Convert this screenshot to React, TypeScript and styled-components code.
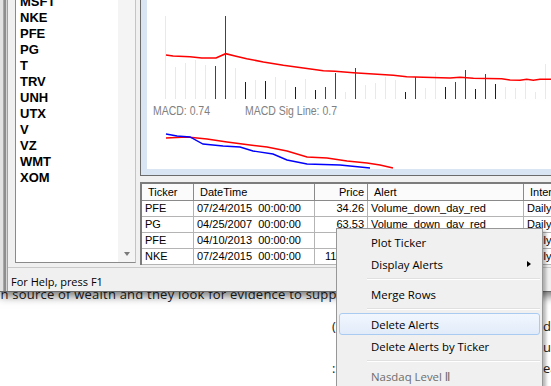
import React from "react";
import styled, { createGlobalStyle } from "styled-components";

const GlobalStyle = createGlobalStyle`
  *, *::before, *::after { box-sizing: border-box; }
  html, body { margin: 0; padding: 0; background: #ffffff; }
  body { overflow: hidden; font-family: "Liberation Sans", Arial, sans-serif; }
`;

const UI_FONT = `"Open Sans", "Noto Sans", "DejaVu Sans", sans-serif`;

const Page = styled.div`
  position: relative;
  width: 551px;
  height: 386px;
  overflow: hidden;
  background: #ffffff;
`;

const Window = styled.div`
  position: relative;
  z-index: 1;
  display: flex;
  width: 640px;
  background: #f0f0f0;
  border-bottom: 1px solid #6a6a6a;
  box-shadow: 0 4px 9px rgba(0, 0, 0, 0.55);
`;

const Frame = styled.div`
  flex: none;
  width: 7px;
  background: linear-gradient(
    to right,
    #e2e2e2 0 3px,
    #a8a8a8 3px 4px,
    #8e8e8e 4px 6px,
    #d4d4d4 6px 7px
  );
`;

const Client = styled.div`
  flex: 1;
  min-width: 0;
  display: flex;
  flex-direction: column;
  border-left: 1px solid #a0a0a0;
`;

const Main = styled.div`
  display: flex;
  align-items: flex-start;
  height: 267px;
  padding-left: 7px;
`;

const ListBox = styled.div`
  flex: none;
  display: flex;
  width: 121px;
  height: 263px;
  border-left: 1px solid #8a8a8a;
  border-right: 1px solid #c4c4c4;
  border-bottom: 1px solid #8a8a8a;
`;

const TickerList = styled.div`
  flex: 1;
  background: #ffffff;
  overflow: hidden;
`;

const TickerItems = styled.ul`
  margin: -6px 0 0;
  padding: 0 0 0 4px;
  list-style: none;
`;

const Ticker = styled.li`
  font: bold 13px/16px "Liberation Sans", Arial, sans-serif;
  color: #000000;
`;

const VScroll = styled.div`
  flex: none;
  width: 17px;
  align-self: stretch;
  display: flex;
  flex-direction: column;
  justify-content: flex-end;
  background: #f4f4f4;
`;

const ScrollButton = styled.div`
  height: 17px;
  display: flex;
  align-items: center;
  justify-content: center;
`;

const DownArrow = styled.span`
  width: 0;
  height: 0;
  border-left: 3.5px solid transparent;
  border-right: 3.5px solid transparent;
  border-top: 4px solid #7a7a7a;
`;

const RightCol = styled.div`
  flex: 1;
  min-width: 0;
  margin-left: 4px;
  display: flex;
  flex-direction: column;
  gap: 6px;
  overflow: hidden;
`;

const Chart = styled.div`
  flex: none;
  height: 176px;
  padding: 0 0 6px 6px;
  background: #d9e5f3;
  border-left: 1px solid #6b6b6b;
  border-bottom: 1px solid #6b6b6b;
`;

const Canvas = styled.div`
  height: 169px;
  background: #ffffff;
  overflow: hidden;
`;

const ChartSvg = styled.svg`
  display: block;
`;

const Grid = styled.div`
  flex: none;
  height: 83px;
  display: grid;
  grid-template-columns: 52px 121px 53px 156px 110px;
  grid-template-rows: 17px;
  grid-auto-rows: 16px;
  align-content: start;
  background: #ffffff;
  border-top: 2px solid #7c7c7c;
  border-left: 2px solid #7c7c7c;
  font-family: "Liberation Sans", Arial, sans-serif;
  font-size: 11px;
  color: #000000;
`;

const HeadCell = styled.div<{ $right?: boolean }>`
  padding: 1px ${(p) => (p.$right ? "3px" : "4px")} 0 ${(p) => (p.$right ? "4px" : "6px")};
  line-height: 15px;
  text-align: ${(p) => (p.$right ? "right" : "left")};
  white-space: nowrap;
  overflow: hidden;
  background: #fbfbfb;
  border-right: 1px solid #8a8a8a;
  border-bottom: 1px solid #8a8a8a;
`;

const Cell = styled.div<{ $right?: boolean }>`
  padding: 0 3px;
  line-height: 15px;
  text-align: ${(p) => (p.$right ? "right" : "left")};
  white-space: pre;
  overflow: hidden;
  border-right: 1px solid #b4b4b4;
  border-bottom: 1px solid #b4b4b4;
`;

const StatusBar = styled.div`
  height: 24px;
  padding: 6px 0 0 3px;
  border-top: 1px solid #c9c9c9;
  font-family: ${UI_FONT};
  font-size: 11px;
  line-height: 16px;
  color: #000000;
`;

const Doc = styled.div`
  position: relative;
  font-family: ${UI_FONT};
  font-size: 13px;
  color: #222222;
`;

const DocCutLine = styled.div`
  margin-top: -8px;
  line-height: 20px;
  white-space: nowrap;
  text-indent: -3px;
  letter-spacing: 0.22px;
`;

const DocColumn = styled.div`
  margin-top: 12px;
`;

const DocLine = styled.div`
  display: flex;
  padding-left: 332px;
  line-height: 21px;
  white-space: nowrap;
`;

const DocLead = styled.span`
  flex: none;
  width: 211px;
  overflow: hidden;
`;

const DocTail = styled.span`
  flex: none;
`;

const Menu = styled.div`
  position: absolute;
  z-index: 3;
  left: 336px;
  top: 228px;
  width: 207px;
  padding: 2px;
  background: #f0f0f0;
  border: 1px solid #979797;
  box-shadow: 3px 3px 3px rgba(0, 0, 0, 0.28);
  font-family: ${UI_FONT};
  font-size: 11.4px;
`;

const MenuItem = styled.div<{ $active?: boolean; $disabled?: boolean }>`
  height: 22px;
  display: flex;
  align-items: center;
  padding: 0 8px 0 31px;
  white-space: nowrap;
  color: ${(p) => (p.$disabled ? "#6d6d6d" : "#000000")};
  border: 1px solid ${(p) => (p.$active ? "#a9cbf2" : "transparent")};
  border-radius: 3px;
  background: ${(p) =>
    p.$active ? "linear-gradient(#f2f7fe, #e1ebf9)" : "transparent"};
`;

const SubArrow = styled.span`
  margin-left: auto;
  width: 0;
  height: 0;
  border-left: 4px solid #000000;
  border-top: 3.5px solid transparent;
  border-bottom: 3.5px solid transparent;
`;

const MenuSeparator = styled.div`
  height: 8px;
  margin-left: 28px;
  display: flex;
  align-items: center;
  &::after {
    content: "";
    flex: 1;
    height: 2px;
    border-top: 1px solid #e0e0e0;
    border-bottom: 1px solid #ffffff;
  }
`;

const tickers = ["MSFT", "NKE", "PFE", "PG", "T", "TRV", "UNH", "UTX", "V", "VZ", "WMT", "XOM"];

const YELLOW = "#fff08c";
const GREEN = "#007400";
const BLUE = "#0000ff";

const bars: Array<[string, number]> = [
  [YELLOW, 16], [YELLOW, 67], [YELLOW, 63], [YELLOW, 60], [YELLOW, 65], [GREEN, 66], [GREEN, 16], [YELLOW, 68],
  [BLUE, 82], [YELLOW, 80], [BLUE, 81], [YELLOW, 77], [YELLOW, 80], [BLUE, 87], [YELLOW, 79], [BLUE, 90],
  [GREEN, 87], [GREEN, 73], [YELLOW, 92], [GREEN, 68], [YELLOW, 85], [YELLOW, 83], [YELLOW, 77], [YELLOW, 80],
  [BLUE, 92], [GREEN, 77], [YELLOW, 88], [YELLOW, 72], [BLUE, 87], [GREEN, 82], [GREEN, 70], [BLUE, 89],
  [GREEN, 74], [BLUE, 84], [YELLOW, 87], [YELLOW, 88], [YELLOW, 82], [YELLOW, 92], [YELLOW, 64],
];

const pricePts =
  "166,55 173,56 190,56.7 201.7,58 216,58 225.7,53.7 235,56 246.7,58.7 263.3,62 283.3,65.3 303.3,68 323.3,70.7 335,71.3 353.3,72.7 373.3,74 393.3,75.3 406.7,76.7 423.3,77.3 450,78 460,77.3 473.3,78.3 501.7,78.7 510,80 520,80.3 526.7,79.3 533.3,80.3 540,79.3 567,79.3";
const macdRed =
  "166,138 187,137 207,139 227,142 250,145 267,147 287,151 307,157 327,158 347,161 367,163 380,165 393,168";
const macdBlue =
  "166,134 177,136 190,137 203,144 223,146 240,147 253,151 273,154 287,160 307,164 340,165 360,167 370,168";

function PriceChart() {
  return (
    <ChartSvg width={420} height={169} viewBox="147 0 420 169">
      {bars.map(([color, top], i) => (
        <rect key={i} x={165 + 10 * i} y={top} width={1} height={99 - top} fill={color} />
      ))}
      <polyline points={pricePts} fill="none" stroke="#ff0000" strokeWidth={1.6} />
      <text
        x={153}
        y={115}
        fontFamily="Liberation Sans, Arial, sans-serif"
        fontSize={12}
        fill="#808080"
        textLength={57}
        lengthAdjust="spacingAndGlyphs"
      >
        MACD: 0.74
      </text>
      <text
        x={245}
        y={115}
        fontFamily="Liberation Sans, Arial, sans-serif"
        fontSize={12}
        fill="#808080"
        textLength={92}
        lengthAdjust="spacingAndGlyphs"
      >
        MACD Sig Line: 0.7
      </text>
      <polyline points={macdRed} fill="none" stroke="#ff0000" strokeWidth={1.4} />
      <polyline points={macdBlue} fill="none" stroke="#0000ff" strokeWidth={1.4} />
    </ChartSvg>
  );
}

type Row = { ticker: string; date: string; price: string; alert: string; interval: string };
const rows: Row[] = [
  { ticker: "PFE", date: "07/24/2015  00:00:00", price: "34.26", alert: "Volume_down_day_red", interval: "Daily" },
  { ticker: "PG", date: "04/25/2007  00:00:00", price: "63.53", alert: "Volume_down_day_red", interval: "Daily" },
  { ticker: "PFE", date: "04/10/2013  00:00:00", price: "28.91", alert: "Volume_down_day_red", interval: "Daily" },
  { ticker: "NKE", date: "07/24/2015  00:00:00", price: "112.660", alert: "Volume_down_day_red", interval: "Daily" },
];

export default function App() {
  return (
    <Page>
      <GlobalStyle />
      <Window>
        <Frame />
        <Client>
          <Main>
            <ListBox>
              <TickerList>
                <TickerItems>
                  {tickers.map((t) => (
                    <Ticker key={t}>{t}</Ticker>
                  ))}
                </TickerItems>
              </TickerList>
              <VScroll>
                <ScrollButton>
                  <DownArrow />
                </ScrollButton>
              </VScroll>
            </ListBox>
            <RightCol>
              <Chart>
                <Canvas>
                  <PriceChart />
                </Canvas>
              </Chart>
              <Grid>
                <HeadCell>Ticker</HeadCell>
                <HeadCell>DateTime</HeadCell>
                <HeadCell $right>Price</HeadCell>
                <HeadCell>Alert</HeadCell>
                <HeadCell>Interval</HeadCell>
                {rows.map((r, i) => (
                  <React.Fragment key={i}>
                    <Cell>{r.ticker}</Cell>
                    <Cell>{r.date}</Cell>
                    <Cell $right>{r.price}</Cell>
                    <Cell>{r.alert}</Cell>
                    <Cell>{r.interval}</Cell>
                  </React.Fragment>
                ))}
              </Grid>
            </RightCol>
          </Main>
          <StatusBar>For Help, press F1</StatusBar>
        </Client>
      </Window>
      <Doc>
        <DocCutLine>in source of wealth and they look for evidence to support their view of the market</DocCutLine>
        <DocColumn>
          <DocLine>
            <DocLead>(or its opposite) and that is foun</DocLead>
            <DocTail>d</DocTail>
          </DocLine>
          <DocLine>
            <DocLead></DocLead>
            <DocTail>u</DocTail>
          </DocLine>
          <DocLine>
            <DocLead>: the trend line and the id</DocLead>
            <DocTail>ea</DocTail>
          </DocLine>
        </DocColumn>
      </Doc>
      <Menu>
        <MenuItem>Plot Ticker</MenuItem>
        <MenuItem>
          Display Alerts
          <SubArrow />
        </MenuItem>
        <MenuSeparator />
        <MenuItem>Merge Rows</MenuItem>
        <MenuSeparator />
        <MenuItem $active>Delete Alerts</MenuItem>
        <MenuItem>Delete Alerts by Ticker</MenuItem>
        <MenuSeparator />
        <MenuItem $disabled>Nasdaq Level Ⅱ</MenuItem>
      </Menu>
    </Page>
  );
}
